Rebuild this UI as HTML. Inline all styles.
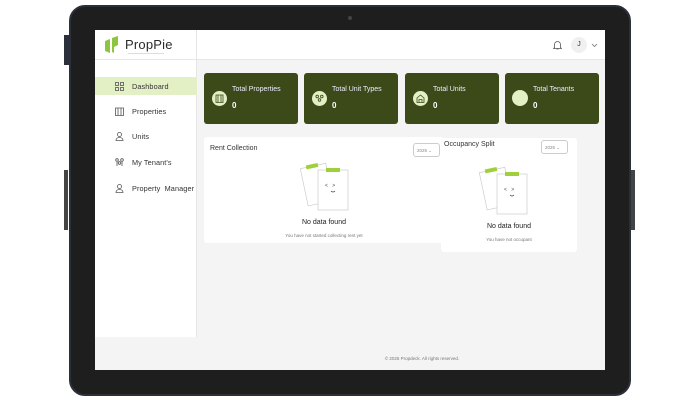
<!DOCTYPE html>
<html><head><meta charset="utf-8"><style>
*{margin:0;padding:0;box-sizing:border-box}
body{width:700px;height:400px;background:#fff;position:relative;overflow:hidden;font-family:"Liberation Sans",sans-serif}
.frame{position:absolute;left:69px;top:5px;width:562px;height:391px;background:#1e1e1f;border-radius:16px;border:2px solid #2b2f3a}
.btn{position:absolute;background:#2b2f3a}
.screen{position:absolute;left:95px;top:30px;width:510px;height:340px;background:#f3f4f3;overflow:hidden}
.side{position:absolute;left:0;top:0;width:102px;height:307px;background:#fff;border-right:1px solid #e6e6e6}
.head{position:absolute;left:102px;top:0;width:408px;height:30px;background:#fff;border-bottom:1px solid #e6e6e6}
.logo{position:absolute;left:0;top:0;width:102px;height:30px;border-bottom:1px solid #e6e6e6}
.nav{position:absolute;left:0;width:102px;height:18px;font-size:7.3px;color:#333;display:flex;align-items:center;letter-spacing:.1px}
.nav svg{margin-left:20px;margin-right:8px}
.card{position:absolute;top:43px;width:94px;height:51px;background:#3c4a1a;border-radius:3px;color:#fff}
.card .ic{position:absolute;left:8px;top:18px;width:15px;height:15px;border-radius:50%;background:#e3efc4}
.card .ic svg{position:absolute;left:3px;top:3px}
.card .t{position:absolute;left:28px;top:13px;font-size:7px;color:#eef}
.card .v{position:absolute;left:28px;top:28px;font-size:8px;font-weight:bold}
.panel{position:absolute;background:#fff;border-radius:3px}
.sel{position:absolute;width:27px;height:14px;border:1px solid #ccc;border-radius:3px;font-size:4.5px;color:#888;padding:4px 0 0 3px}
.nd{position:absolute;width:100%;text-align:center;font-size:7px;color:#222}
.sub{position:absolute;width:100%;text-align:center;font-size:4.5px;color:#777}
</style></head><body>
<div class="btn" style="left:64px;top:35px;width:5px;height:30px"></div>
<div class="btn" style="left:64px;top:170px;width:4px;height:60px;background:#444"></div>
<div class="btn" style="left:631px;top:170px;width:4px;height:60px;background:#444"></div>
<div class="frame"></div>
<div style="position:absolute;left:348px;top:16px;width:4px;height:4px;border-radius:50%;background:#444"></div>
<div class="screen">
 <div class="side">
  <div class="logo">
   <svg style="position:absolute;left:10px;top:6px" width="16" height="17" viewBox="0 0 16 17"><polygon points="0,5 5,3 5,17 0,15" fill="#8cc63f"/><polygon points="7,2 13,0 13,9 9,11 9,17 7,16" fill="#8cc63f"/></svg>
   <div style="position:absolute;left:30px;top:7px;font-size:13px;color:#2a2a2a;letter-spacing:.2px">PropPie</div>
   <div style="position:absolute;left:33px;top:23px;width:36px;height:1px;background:#d8e6b8"></div>
  </div>
  <div class="nav" style="top:47px;background:#e3efc4">
   <svg width="9" height="9" viewBox="0 0 9 9" fill="none" stroke="#555" stroke-width=".8"><rect x=".5" y=".5" width="3" height="3"/><rect x="5.5" y=".5" width="3" height="3"/><rect x=".5" y="5.5" width="3" height="3"/><rect x="5.5" y="5.5" width="3" height="3"/></svg>Dashboard</div>
  <div class="nav" style="top:72px"><svg width="9" height="9" viewBox="0 0 9 9" fill="none" stroke="#555" stroke-width=".8"><path d="M.5 1h8v7.5h-8zM3 1v7.5M6 1v7.5"/></svg>Properties</div>
  <div class="nav" style="top:97px"><svg width="9" height="9" viewBox="0 0 9 9" fill="none" stroke="#555" stroke-width=".8"><circle cx="4.5" cy="2.5" r="2"/><path d="M1 8.5c0-4 7-4 7 0z"/></svg>Units</div>
  <div class="nav" style="top:123px"><svg width="9" height="9" viewBox="0 0 9 9" fill="none" stroke="#555" stroke-width=".8"><circle cx="2" cy="2" r="1.3"/><circle cx="7" cy="2" r="1.3"/><circle cx="4.5" cy="5" r="1.3"/><path d="M2 4v4M7 4v4"/></svg>My Tenant's</div>
  <div class="nav" style="top:149px"><svg width="9" height="9" viewBox="0 0 9 9" fill="none" stroke="#555" stroke-width=".8"><circle cx="4.5" cy="2.5" r="2"/><path d="M1 8.5c0-4 7-4 7 0z"/></svg>Property &nbsp;Manager</div>
 </div>
 <div class="head">
  <svg style="position:absolute;left:356px;top:10px" width="9" height="10" viewBox="0 0 9 10" fill="none" stroke="#555" stroke-width=".8"><path d="M1.5 7.5V4.5a3 3 0 016 0v3l1 1h-8zM3.5 9h2"/></svg>
  <div style="position:absolute;left:374px;top:7px;width:16px;height:16px;border-radius:50%;background:#f0f0f0;font-size:7px;text-align:center;line-height:16px;color:#333">J</div>
  <svg style="position:absolute;left:394px;top:13px" width="7" height="5" viewBox="0 0 7 5" fill="none" stroke="#777" stroke-width=".8"><path d="M1 1l2.5 2.5L6 1"/></svg>
 </div>
 <div class="card" style="left:109px"><div class="ic"><svg width="9" height="9" viewBox="0 0 9 9" fill="none" stroke="#3c4a1a" stroke-width=".8"><path d="M1 1h7v7.5H1zM3 1v7.5M6 1v7.5"/></svg></div><div class="t">Total Properties</div><div class="v">0</div></div>
 <div class="card" style="left:209px"><div class="ic"><svg width="9" height="9" viewBox="0 0 9 9" fill="none" stroke="#3c4a1a" stroke-width=".8"><circle cx="2.2" cy="2.5" r="1.3"/><circle cx="6.8" cy="2.5" r="1.3"/><circle cx="4.5" cy="6" r="1.3"/></svg></div><div class="t">Total Unit Types</div><div class="v">0</div></div>
 <div class="card" style="left:310px"><div class="ic"><svg width="9" height="9" viewBox="0 0 9 9" fill="none" stroke="#3c4a1a" stroke-width=".8"><path d="M1 4L4.5 1 8 4v4.5H1zM3 5.5h3v3H3z"/></svg></div><div class="t">Total Units</div><div class="v">0</div></div>
 <div class="card" style="left:410px"><div class="ic" style="left:7px;top:17px;width:16px;height:16px"></div><div class="t">Total Tenants</div><div class="v">0</div></div>
 <div class="panel" style="left:109px;top:107px;width:240px;height:106px">
  <div style="position:absolute;left:6px;top:8px;font-size:7px;color:#333">Rent Collection</div>
  <div class="sel" style="left:209px;top:6px">2025 &#8964;</div>
  <svg style="position:absolute;left:96px;top:23px" width="52" height="52" viewBox="0 0 52 52"><g transform="rotate(-12 15 25)"><rect x="4" y="6" width="26" height="38" fill="#fff" stroke="#ccc" stroke-width=".7"/><rect x="10" y="4" width="12" height="4" fill="#9fd03c"/></g><rect x="18" y="10" width="30" height="40" fill="#fff" stroke="#ccc" stroke-width=".7"/><rect x="26" y="8" width="14" height="4" fill="#9fd03c"/><text x="25" y="27" font-size="5" fill="#444">&lt; &#8239;&#8239;&#8239;&gt;</text><path d="M31 31q2 2 4 0" stroke="#444" fill="none" stroke-width=".7"/></svg>
  <div class="nd" style="top:82px">No data found</div>
  <div class="sub" style="top:96px">You have not started collecting rent yet</div>
 </div>
 <div class="panel" style="left:346px;top:108px;width:136px;height:114px">
  <div style="position:absolute;left:3px;top:3px;font-size:7px;color:#333">Occupancy Split</div>
  <div class="sel" style="left:100px;top:2px">2025 &#8964;</div>
  <svg style="position:absolute;left:38px;top:26px" width="52" height="52" viewBox="0 0 52 52"><g transform="rotate(-12 15 25)"><rect x="4" y="6" width="26" height="38" fill="#fff" stroke="#ccc" stroke-width=".7"/><rect x="10" y="4" width="12" height="4" fill="#9fd03c"/></g><rect x="18" y="10" width="30" height="40" fill="#fff" stroke="#ccc" stroke-width=".7"/><rect x="26" y="8" width="14" height="4" fill="#9fd03c"/><text x="25" y="27" font-size="5" fill="#444">&lt; &#8239;&#8239;&#8239;&gt;</text><path d="M31 31q2 2 4 0" stroke="#444" fill="none" stroke-width=".7"/></svg>
  <div class="nd" style="top:85px">No data found</div>
  <div class="sub" style="top:99px">You have not occupant</div>
 </div>
 <div style="position:absolute;left:0;top:326px;width:654px;text-align:center;font-size:4.5px;color:#777">© 2025 Propdeck. All rights reserved.</div>
</div>
</body></html>
